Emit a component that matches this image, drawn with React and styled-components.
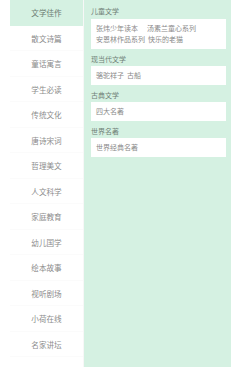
import React from "react";
import styled, { createGlobalStyle } from "styled-components";

const Global = createGlobalStyle`
  html, body { margin: 0; padding: 0; background: #fff; }
  body { font-family: "Noto Sans CJK SC", "Noto Sans", sans-serif; }
`;

const Page = styled.div`
  display: flex;
  width: 243px;
  height: 367px;
  overflow: hidden;
  background: #fff;
`;

const Sidebar = styled.ul`
  list-style: none;
  margin: 0;
  padding: 0 0 0 10px;
  width: 73px;
  flex: none;
  box-shadow: 1px 0 1px rgba(0, 0, 0, 0.03);
`;

const NavItem = styled.li`
  height: 25.5px;
  line-height: 25.5px;
  text-align: center;
  font-size: 7.6px;
  color: ${(p) => (p.$active ? "#6a7a70" : "#8c8c8c")};
  background: ${(p) => (p.$active ? "#d5f1e2" : "transparent")};
  border-bottom: 1px solid ${(p) => (p.$active ? "transparent" : "#fbfbfb")};
  box-sizing: border-box;
  white-space: nowrap;
`;

const Panel = styled.section`
  width: 147px;
  flex: none;
  margin-left: 1px;
  background: #d5f1e2;
  padding: 1.5px 5px 0 7px;
  box-sizing: border-box;
  display: flex;
  flex-direction: column;
`;

const GroupTitle = styled.div`
  padding-top: 2.5px;
  padding-bottom: 0.5px;
  line-height: 14px;
  font-size: 7px;
  color: #6f7f76;
`;

const Box = styled.div`
  background: #fff;
  padding: 4px 4px 3.5px 5px;
  line-height: 11.5px;
  font-size: 7px;
  color: #8a8a8a;
  display: flex;
  flex-wrap: wrap;
  column-gap: 3px;
`;

const Book = styled.span`
  white-space: nowrap;
  margin-right: ${(p) => (p.$wide ? "6px" : "0")};
`;

const nav = [
  "文学佳作", "散文诗篇", "童话寓言", "学生必读", "传统文化", "唐诗宋词", "哲理美文",
  "人文科学", "家庭教育", "幼儿国学", "绘本故事", "视听剧场", "小荷在线", "名家讲坛",
];

const groups = [
  { title: "儿童文学", books: ["张炜少年读本", "汤素兰童心系列", "安恩林作品系列", "快乐的老猫"] },
  { title: "现当代文学", books: ["骆驼祥子", "古船"] },
  { title: "古典文学", books: ["四大名著"] },
  { title: "世界名著", books: ["世界经典名著"] },
];

export default function App() {
  return (
    <>
      <Global />
      <Page>
        <Sidebar>
          {nav.map((n, i) => (
            <NavItem key={n} $active={i === 0}>{n}</NavItem>
          ))}
        </Sidebar>
        <Panel>
          {groups.map((g) => (
            <React.Fragment key={g.title}>
              <GroupTitle>{g.title}</GroupTitle>
              <Box>
                {g.books.map((b, i) => (
                  <Book key={b} $wide={i === 0 && g.books.length > 2}>{b}</Book>
                ))}
              </Box>
            </React.Fragment>
          ))}
        </Panel>
      </Page>
    </>
  );
}
